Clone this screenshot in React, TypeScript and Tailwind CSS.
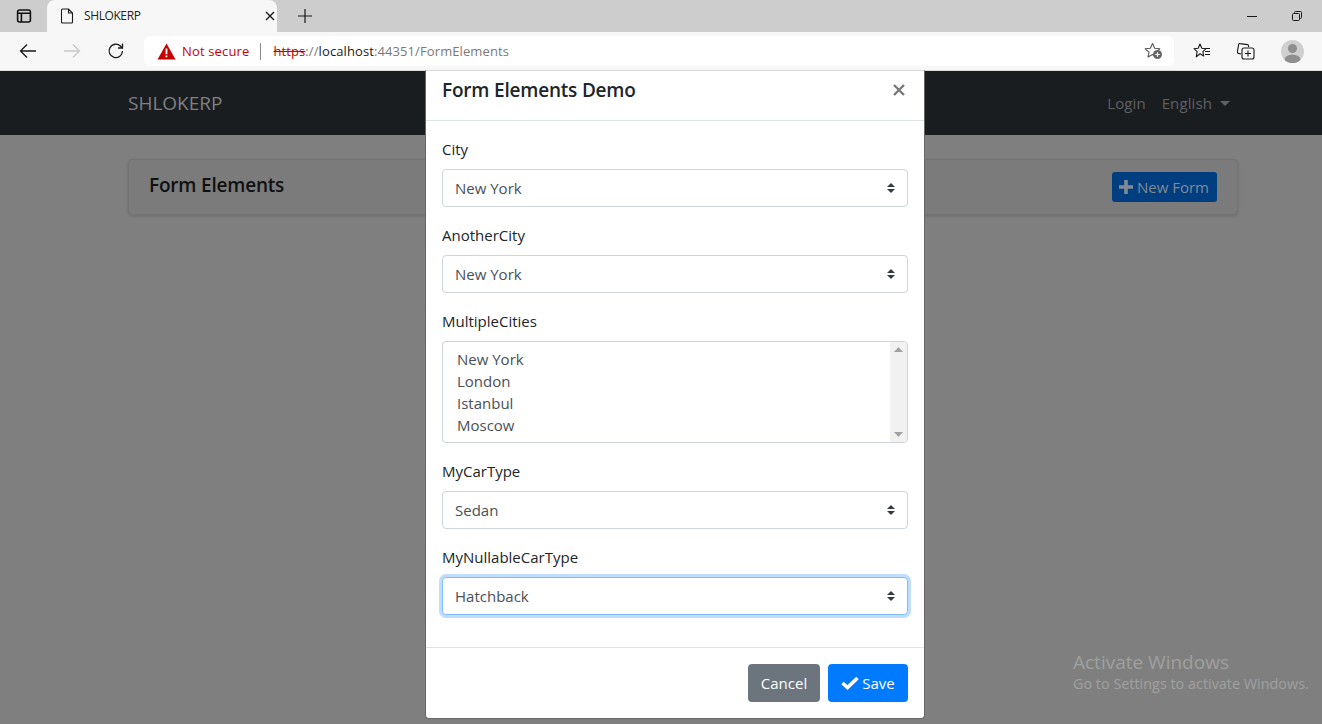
import React from "react";

const font = { fontFamily: '"Open Sans", "Noto Sans", sans-serif' };

function SelectArrows() {
  return (
    <svg width="8" height="10" viewBox="0 0 8 10" className="shrink-0">
      <path d="M4 0 L8 4 H0 Z M4 10 L0 6 H8 Z" fill="#343a40" />
    </svg>
  );
}

function Field({ label, value, focus }: { label: string; value: string; focus?: boolean }) {
  return (
    <div className="mb-4">
      <div className="mb-2 h-6 text-[15px] leading-6 text-[#212529]">{label}</div>
      <div
        className={
          focus
            ? "flex h-[38px] items-center justify-between rounded border border-[#80bdff] bg-white pl-3 pr-[12px] text-[15px] text-[#495057] shadow-[0_0_0_3px_rgba(0,123,255,0.25)]"
            : "flex h-[38px] items-center justify-between rounded border border-[#ced4da] bg-white pl-3 pr-[12px] text-[15px] text-[#495057]"
        }
      >
        <span>{value}</span>
        <SelectArrows />
      </div>
    </div>
  );
}

function MultiField() {
  return (
    <div className="mb-4">
      <div className="mb-2 h-6 text-[15px] leading-6 text-[#212529]">MultipleCities</div>
      <div className="flex h-[102px] overflow-hidden rounded border border-[#ced4da] bg-white">
        <div className="flex-1 pl-[14px] pt-[6px] text-[15px] leading-[22px] text-[#495057]">
          <div>New York</div>
          <div>London</div>
          <div>Istanbul</div>
          <div>Moscow</div>
        </div>
        <div className="flex w-[17px] flex-col items-center justify-between bg-[#f1f1f1] py-[5px]">
          <svg width="9" height="5" viewBox="0 0 9 5"><path d="M4.5 0 L9 5 H0 Z" fill="#a3a3a3" /></svg>
          <svg width="9" height="5" viewBox="0 0 9 5"><path d="M0 0 H9 L4.5 5 Z" fill="#a3a3a3" /></svg>
        </div>
      </div>
    </div>
  );
}

function BrowserChrome() {
  return (
    <div className="shrink-0" style={font}>
      <div className="flex h-8 items-end bg-[#cdcdcd]">
        <div className="flex h-8 w-[47px] items-center justify-center">
          <svg width="16" height="16" viewBox="0 0 16 16" fill="none" stroke="#111" strokeWidth="1.6">
            <rect x="1.6" y="2" width="12.8" height="12" rx="2" />
            <path d="M1.6 5.2 H14.4 M5.4 5.2 V14" />
          </svg>
        </div>
        <div className="flex h-8 w-[230px] items-center rounded-t-lg bg-[#f7f7f7] pl-[13px] pr-[2px]">
          <svg width="14" height="16" viewBox="0 0 14 16" fill="none" stroke="#1a1a1a" strokeWidth="1.1">
            <path d="M2.5 1 H8.5 L12.5 5 V14 a1 1 0 0 1 -1 1 H2.5 a1 1 0 0 1 -1 -1 V2 a1 1 0 0 1 1 -1 Z M8.5 1 V5 H12.5" />
          </svg>
          <span className="ml-[10px] flex-1 text-[12px] tracking-[-0.4px] text-[#222]">SHLOKERP</span>
          <svg width="10" height="10" viewBox="0 0 10 10" stroke="#1a1a1a" strokeWidth="1.4">
            <path d="M1 1 L9 9 M9 1 L1 9" />
          </svg>
        </div>
        <div className="flex h-8 w-[55px] items-center justify-center">
          <svg width="14" height="14" viewBox="0 0 14 14" stroke="#1a1a1a" strokeWidth="1.2">
            <path d="M7 0 V14 M0 7 H14" />
          </svg>
        </div>
        <div className="flex-1" />
        <div className="flex h-8 items-center">
          <svg width="12" height="12" viewBox="0 0 12 12" stroke="#1a1a1a" strokeWidth="1" className="mr-[33px]">
            <path d="M1 6.5 H11" />
          </svg>
          <svg width="12" height="12" viewBox="0 0 12 12" fill="none" stroke="#1a1a1a" strokeWidth="1" className="mr-[19px]">
            <rect x="1.5" y="3.5" width="7" height="7" rx="1" />
            <path d="M3.5 3.5 V2.5 a1 1 0 0 1 1 -1 H9.5 a1 1 0 0 1 1 1 V7.5 a1 1 0 0 1 -1 1 H8.5" />
          </svg>
        </div>
      </div>
      <div className="flex h-[39px] items-center border-b border-[#dcdcdc] bg-[#f7f7f7]">
        <div className="flex w-[144px] items-center pl-[19px]">
          <svg width="18" height="16" viewBox="0 0 18 16" fill="none" stroke="#1a1a1a" strokeWidth="1.3">
            <path d="M17 8 H1.5 M8 1.5 L1.5 8 L8 14.5" />
          </svg>
          <svg width="18" height="16" viewBox="0 0 18 16" fill="none" stroke="#c9c9c9" strokeWidth="1.3" className="ml-[26px]">
            <path d="M1 8 H16.5 M10 1.5 L16.5 8 L10 14.5" />
          </svg>
          <svg width="18" height="18" viewBox="0 0 18 18" fill="none" stroke="#1a1a1a" strokeWidth="1.3" className="ml-[26px]">
            <path d="M15.5 9 A6.7 6.7 0 1 1 13.4 4 L15.5 6 M15.5 1.5 V6 H11" />
          </svg>
        </div>
        <div className="flex h-[30px] w-[1030px] items-center rounded-md bg-white pl-[13px] pr-[10px]">
          <svg width="19" height="17" viewBox="0 0 19 17">
            <path d="M9.5 0.5 L18.5 16.5 H0.5 Z" fill="#c80000" />
            <path d="M8.6 5.5 H10.4 V11.2 H8.6 Z M8.6 12.4 H10.4 V14.2 H8.6 Z" fill="#fff" />
          </svg>
          <span className="ml-[6px] pt-px text-[13px] tracking-[0.15px] text-[#c80000]">Not secure</span>
          <span className="ml-[11px] mr-[12px] h-[17px] w-px bg-[#8a8a8a]" />
          <span className="pt-px text-[13px] tracking-[0.1px] text-[#7a7a7a]">
            <span className="text-[#c80000] line-through">https</span>
            ://<span className="text-[#1a1a1a]">localhost</span>:44351/FormElements
          </span>
          <span className="flex-1" />
          <svg width="20" height="20" viewBox="0 0 20 20" fill="none">
            <path d="M8.5 2.5 L10.7 7.2 L15.8 7.8 L12 11.2 L13 16 L8.5 13.6 L4 16 L5 11.2 L1.2 7.8 L6.3 7.2 Z" stroke="#555" strokeWidth="1.1" strokeLinejoin="round" />
            <circle cx="13.5" cy="13.5" r="4.5" fill="#666" />
            <path d="M13.5 11.3 V15.7 M11.3 13.5 H15.7" stroke="#fff" strokeWidth="1.1" />
          </svg>
        </div>
        <div className="flex flex-1 items-center pl-[19px]">
          <svg width="18" height="18" viewBox="0 0 18 18" fill="none" stroke="#1a1a1a" strokeWidth="1.1">
            <path d="M7 2 L8.8 6.2 L13 6.7 L9.9 9.6 L10.7 14 L7 11.8 L3.3 14.8 L4.1 9.6 L1 6.7 L5.2 6.2 Z" strokeLinejoin="round" />
            <path d="M12 6.5 H17 M12 9.5 H17 M12 12.5 H17" />
          </svg>
          <svg width="20" height="20" viewBox="0 0 20 20" fill="none" stroke="#1a1a1a" strokeWidth="1.1" className="ml-[25px]">
            <path d="M5 13 L2.4 12.4 a1.3 1.3 0 0 1 -1 -1.5 L2.6 3.6 a1.3 1.3 0 0 1 1.5 -1 L11.5 3.6 a1.3 1.3 0 0 1 1.1 1.4 V6" />
            <rect x="6" y="7" width="12" height="11" rx="2" />
            <path d="M12 9.5 V15.5 M9 12.5 H15" />
          </svg>
          <div className="ml-[25px] flex h-[23px] w-[23px] items-center justify-center overflow-hidden rounded-full bg-[#cfcfcf]">
            <svg width="23" height="23" viewBox="0 0 23 23" fill="#8f8f8f">
              <circle cx="11.5" cy="8.5" r="4.5" />
              <ellipse cx="11.5" cy="20" rx="8" ry="5.5" />
            </svg>
          </div>
        </div>
      </div>
    </div>
  );
}

function Modal() {
  return (
    <div className="absolute left-[425px] top-[-1px] flex h-[649px] w-[500px] flex-col overflow-hidden rounded-b border border-[#666] border-t-[#d9d9d9] bg-white">
      <div className="flex h-[50px] shrink-0 items-center justify-between border-b border-[#dee2e6] pb-[11px] pl-4 pr-[19px]">
        <span className="text-[19px] font-semibold leading-[28px] tracking-[-0.2px] text-[#212529]">Form Elements Demo</span>
        <svg width="12" height="12" viewBox="0 0 12 12" stroke="#787878" strokeWidth="2.4">
          <path d="M1 1 L11 11 M11 1 L1 11" />
        </svg>
      </div>
      <div className="flex-1 px-4 pt-4">
        <Field label="City" value="New York" />
        <Field label="AnotherCity" value="New York" />
        <MultiField />
        <Field label="MyCarType" value="Sedan" />
        <Field label="MyNullableCarType" value="Hatchback" focus />
      </div>
      <div className="flex h-[71px] shrink-0 items-center justify-end gap-2 border-t border-[#dee2e6] pr-4">
        <div className="flex h-[38px] w-[72px] items-center justify-center rounded bg-[#6c757d] text-[15px] text-white">Cancel</div>
        <div className="flex h-[38px] w-[80px] items-center justify-center gap-[3px] rounded bg-[#007bff] text-[15px] text-white">
          <svg width="18" height="14" viewBox="0 0 18 14" fill="none" stroke="#fff" strokeWidth="3.6">
            <path d="M1.5 7 L6.5 11.5 L16.5 2" />
          </svg>
          Save
        </div>
      </div>
    </div>
  );
}

export default function App() {
  return (
    <div className="flex h-[724px] w-[1322px] flex-col overflow-hidden bg-[#7f7f7f]" style={font}>
      <BrowserChrome />
      <div className="relative flex-1">
        <div className="flex h-[64px] items-center justify-between bg-[#1a1d20] pl-[128px] pr-[92px]">
          <span className="text-[19px] text-[#7f8081]">SHLOKERP</span>
          <div className="flex items-center gap-4 text-[15px] tracking-[0.1px] text-[#5e6061]">
            <span>Login</span>
            <span className="flex items-center gap-2">
              English
              <span className="h-0 w-0 border-x-[5px] border-t-[5px] border-x-transparent border-t-[#5e6061]" />
            </span>
          </div>
        </div>
        <div className="ml-[128px] mt-6 flex h-[56px] w-[1110px] items-center justify-between rounded border border-[#747474] bg-[#7b7b7b] pl-5 pr-5 shadow-[0_1px_3px_rgba(0,0,0,0.15)]">
          <span className="mb-1 text-[19px] font-semibold tracking-[-0.2px] text-[#111]">Form Elements</span>
          <div className="flex h-[30px] w-[105px] items-center justify-center gap-[3px] rounded-[3px] bg-[#003e80] pr-[2px] text-[15px] text-[#808a95]">
            <svg width="16" height="16" viewBox="0 0 16 16" stroke="#808a95" strokeWidth="3.6">
              <path d="M8 1 V15 M1 8 H15" />
            </svg>
            New Form
          </div>
        </div>
        <div className="absolute left-[1073px] top-[579px] text-[#a0a0a0]">
          <div className="text-[19px] leading-6">Activate Windows</div>
          <div className="whitespace-nowrap text-[14.4px] leading-5">Go to Settings to activate Windows.</div>
        </div>
        <Modal />
      </div>
    </div>
  );
}
